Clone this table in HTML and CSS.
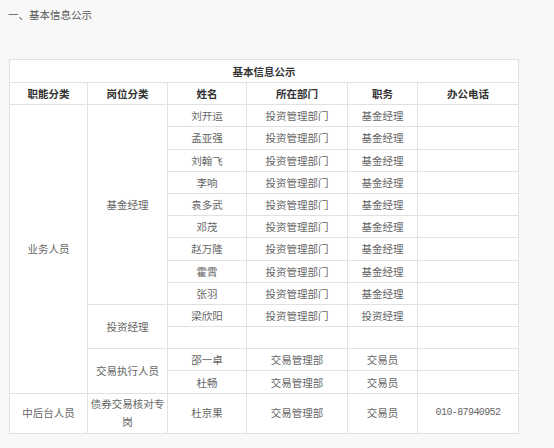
FILE: index.html
```html
<!DOCTYPE html>
<html lang="zh">
<head>
<meta charset="utf-8">
<link rel="stylesheet" href="styles.css">
</head>
<body>
<div class="page">
  <p class="heading">一、基本信息公示</p>
  <table class="info">
    <colgroup>
      <col class="c1"><col class="c2"><col class="c3"><col class="c4"><col class="c5"><col class="c6">
    </colgroup>
    <tr class="caption-row"><th colspan="6" class="caption">基本信息公示</th></tr>
    <tr class="head-row">
      <th>职能分类</th><th>岗位分类</th><th>姓名</th><th>所在部门</th><th>职务</th><th>办公电话</th>
    </tr>
    <tr><td rowspan="13">业务人员</td><td rowspan="9">基金经理</td><td>刘开运</td><td>投资管理部门</td><td>基金经理</td><td></td></tr>
    <tr><td>孟亚强</td><td>投资管理部门</td><td>基金经理</td><td></td></tr>
    <tr><td>刘翰飞</td><td>投资管理部门</td><td>基金经理</td><td></td></tr>
    <tr><td>李响</td><td>投资管理部门</td><td>基金经理</td><td></td></tr>
    <tr><td>袁多武</td><td>投资管理部门</td><td>基金经理</td><td></td></tr>
    <tr><td>邓茂</td><td>投资管理部门</td><td>基金经理</td><td></td></tr>
    <tr><td>赵万隆</td><td>投资管理部门</td><td>基金经理</td><td></td></tr>
    <tr><td>霍霄</td><td>投资管理部门</td><td>基金经理</td><td></td></tr>
    <tr><td>张羽</td><td>投资管理部门</td><td>基金经理</td><td></td></tr>
    <tr><td rowspan="2">投资经理</td><td>梁欣阳</td><td>投资管理部门</td><td>投资经理</td><td></td></tr>
    <tr><td></td><td></td><td></td><td></td></tr>
    <tr><td rowspan="2">交易执行人员</td><td>邵一卓</td><td>交易管理部</td><td>交易员</td><td></td></tr>
    <tr><td>杜畅</td><td>交易管理部</td><td>交易员</td><td></td></tr>
    <tr class="tall"><td>中后台人员</td><td>债券交易核对专岗</td><td>杜京果</td><td>交易管理部</td><td>交易员</td><td class="phone">010-87940952</td></tr>
  </table>
</div>
</body>
</html>
```
FILE: styles.css
```css
html, body {
  margin: 0;
  padding: 0;
  background: #f8f8f8;
}
body {
  font-family: "Noto Sans CJK SC", "Microsoft YaHei", sans-serif;
  font-size: 10.5px;
  color: #666;
}
.page {
  padding: 0 8px;
}
.heading {
  margin: 0;
  padding-top: 7px;
  line-height: 16px;
  color: #555;
}
.info {
  margin: 36px 0 0 1px;
  border-collapse: collapse;
  table-layout: fixed;
  width: 509px;
  background: #fff;
}
.c1 { width: 78px; }
.c2 { width: 80px; }
.c3 { width: 79px; }
.c4 { width: 101px; }
.c5 { width: 70px; }
.c6 { width: 101px; }
.info th, .info td {
  border: 1px solid #e1e1e1;
  text-align: center;
  vertical-align: middle;
  padding: 2px 1px;
  line-height: 17px;
  height: 17.2px;
}
.info th {
  color: #333;
  font-weight: bold;
}
.caption-row th {
  height: 18px;
}
.info .tall td {
  line-height: 18px;
  padding: 1px 1px 2px;
}
.info .phone {
  font-family: "Liberation Mono", monospace;
  font-size: 10px;
  letter-spacing: -0.6px;
}
```
